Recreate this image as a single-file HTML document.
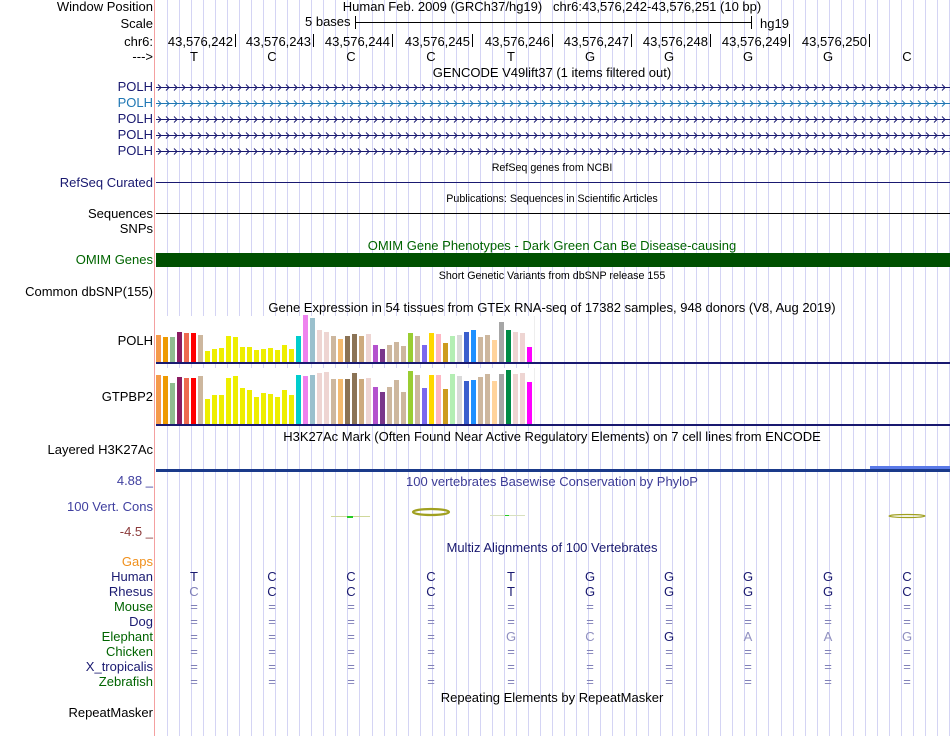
<!DOCTYPE html>
<html><head><meta charset="utf-8"><style>
body{margin:0;width:950px;height:736px;background:#fff;overflow:hidden;position:relative;font-family:"Liberation Sans",sans-serif;font-size:13px;color:#000}
.t{position:absolute;white-space:nowrap;line-height:14px}
.l{position:absolute;right:797px;text-align:right;white-space:nowrap;line-height:14px}
.c{position:absolute;white-space:nowrap;line-height:14px;transform:translateX(-50%)}
.s{font-size:10.7px}
.nv{color:#191970}
.gr{color:#006400}
</style></head><body>
<div id="grid"></div>
<div style="position:absolute;left:154px;top:0;width:1px;height:736px;background:#f4a0a0"></div>

<div class="l" style="top:0">Window Position</div>
<div class="c" style="left:552px;top:0">Human Feb. 2009 (GRCh37/hg19) &nbsp; chr6:43,576,242-43,576,251 (10 bp)</div>
<div class="l" style="top:17px">Scale</div>
<div class="t" style="left:305px;top:15px">5 bases</div>
<div style="position:absolute;left:355px;top:22px;width:396px;height:1px;background:#000"></div>
<div style="position:absolute;left:355px;top:16px;width:1px;height:13px;background:#000"></div>
<div style="position:absolute;left:751px;top:16px;width:1px;height:13px;background:#000"></div>
<div class="t" style="left:760px;top:17px">hg19</div>
<div class="l" style="top:35px">chr6:</div>
<div class="l" style="top:50px">---&gt;</div>
<div id="pos"></div>
<div class="c" style="left:552px;top:66px">GENCODE V49lift37 (1 items filtered out)</div>

<div class="l nv" style="top:80px">POLH</div>
<div class="l" style="top:96px;color:#1f77b4">POLH</div>
<div class="l nv" style="top:112px">POLH</div>
<div class="l nv" style="top:128px">POLH</div>
<div class="l nv" style="top:144px">POLH</div>
<svg style="position:absolute;left:156px;top:80px" width="794" height="80">
<defs><pattern id="ch" width="8" height="16" patternUnits="userSpaceOnUse"><path d="M2 4.5 L5 7.5 L2 10.5" stroke="#191970" fill="none" stroke-width="1"/></pattern>
<pattern id="ch2" width="8" height="16" patternUnits="userSpaceOnUse"><path d="M2 4.5 L5 7.5 L2 10.5" stroke="#1f77b4" fill="none" stroke-width="1"/></pattern></defs>
<rect x="0" y="7" width="794" height="1" fill="#191970"/><rect x="0" y="0" width="794" height="16" fill="url(#ch)"/>
<rect x="0" y="23" width="794" height="1" fill="#1f77b4"/><rect x="0" y="16" width="794" height="16" fill="url(#ch2)"/>
<rect x="0" y="39" width="794" height="1" fill="#191970"/><rect x="0" y="32" width="794" height="16" fill="url(#ch)"/>
<rect x="0" y="55" width="794" height="1" fill="#191970"/><rect x="0" y="48" width="794" height="16" fill="url(#ch)"/>
<rect x="0" y="71" width="794" height="1" fill="#191970"/><rect x="0" y="64" width="794" height="16" fill="url(#ch)"/>
</svg>

<div class="c s" style="left:552px;top:161px">RefSeq genes from NCBI</div>
<div class="l nv" style="top:176px">RefSeq Curated</div>
<div style="position:absolute;left:156px;top:182px;width:794px;height:1px;background:#191970"></div>
<div class="c s" style="left:552px;top:192px">Publications: Sequences in Scientific Articles</div>
<div class="l" style="top:207px">Sequences</div>
<div style="position:absolute;left:156px;top:213px;width:794px;height:1px;background:#000"></div>
<div class="l" style="top:222px">SNPs</div>
<div class="c gr" style="left:552px;top:239px">OMIM Gene Phenotypes - Dark Green Can Be Disease-causing</div>
<div class="l gr" style="top:253px">OMIM Genes</div>
<div style="position:absolute;left:156px;top:253px;width:794px;height:14px;background:#005000"></div>
<div class="c s" style="left:552px;top:269px">Short Genetic Variants from dbSNP release 155</div>
<div class="l" style="top:285px">Common dbSNP(155)</div>
<div class="c" style="left:552px;top:301px">Gene Expression in 54 tissues from GTEx RNA-seq of 17382 samples, 948 donors (V8, Aug 2019)</div>
<div style="position:absolute;left:156px;top:316px;width:378px;height:47px;background:#fff;border-right:1px solid #eee"></div>
<div style="position:absolute;left:156px;top:368px;width:378px;height:56px;background:#fff;border-right:1px solid #eee"></div>
<div class="l" style="top:334px">POLH</div>
<div class="l" style="top:390px">GTPBP2</div>
<div id="bars"></div>
<div style="position:absolute;left:156px;top:362px;width:794px;height:2px;background:#191970"></div>
<div style="position:absolute;left:156px;top:424px;width:794px;height:2px;background:#191970"></div>
<div class="c" style="left:552px;top:430px">H3K27Ac Mark (Often Found Near Active Regulatory Elements) on 7 cell lines from ENCODE</div>
<div class="l" style="top:443px">Layered H3K27Ac</div>
<div style="position:absolute;left:156px;top:469px;width:794px;height:3px;background:#1a3a8a"></div>
<div style="position:absolute;left:870px;top:466px;width:80px;height:3px;background:#5a7ae8"></div>

<div class="l" style="top:474px;color:#4040a0">4.88 _</div>
<div class="c" style="left:552px;top:475px;color:#3c3c96">100 vertebrates Basewise Conservation by PhyloP</div>
<div class="l" style="top:500px;color:#4040a0">100 Vert. Cons</div>
<div class="l" style="top:525px;color:#8b3a3a">-4.5 _</div>
<svg style="position:absolute;left:156px;top:500px" width="794" height="30">
<rect x="175" y="16" width="39" height="1" fill="#cfd89a"/><rect x="191" y="16" width="6" height="2" fill="#2c2"/>
<ellipse cx="275" cy="12" rx="18" ry="3" fill="none" stroke="#a0a020" stroke-width="2.2"/>
<rect x="334" y="15" width="35" height="1" fill="#d8e0c0"/><rect x="349" y="15" width="4" height="1" fill="#2c2"/>
<ellipse cx="751" cy="16" rx="18" ry="1.5" fill="none" stroke="#a0a020" stroke-width="1.2"/>
</svg>
<div class="c nv" style="left:552px;top:541px">Multiz Alignments of 100 Vertebrates</div>
<div class="l" style="top:555px;color:#f0901c">Gaps</div>
<div class="l nv" style="top:570px">Human</div>
<div class="l nv" style="top:585px">Rhesus</div>
<div class="l gr" style="top:600px">Mouse</div>
<div class="l nv" style="top:615px">Dog</div>
<div class="l gr" style="top:630px">Elephant</div>
<div class="l gr" style="top:645px">Chicken</div>
<div class="l nv" style="top:660px">X_tropicalis</div>
<div class="l gr" style="top:675px">Zebrafish</div>
<div id="aln"></div>
<div class="c" style="left:552px;top:691px">Repeating Elements by RepeatMasker</div>
<div class="l" style="top:706px">RepeatMasker</div>

<script>
var g='';for(var x=167;x<950;x+=12.03){g+='<div style="position:absolute;left:'+Math.round(x)+'px;top:0;width:1px;height:736px;background:#d4d4f4"></div>';}
document.getElementById('grid').innerHTML=g;
var cx=[194,272,351,431,511,590,669,748,828,907];
var nums=['242','243','244','245','246','247','248','249','250'];
var bases='TCCCTGGGGC';var p='';
for(var i=0;i<9;i++){p+='<div class="t" style="right:'+(950-cx[i]-39)+'px;top:35px">43,576,'+nums[i]+'</div><div style="position:absolute;left:'+(cx[i]+41)+'px;top:34px;width:1px;height:13px;background:#000"></div>';}
for(var i=0;i<10;i++){p+='<div class="c" style="left:'+cx[i]+'px;top:50px">'+bases[i]+'</div>';}
document.getElementById('pos').innerHTML=p;
var col=['#F59A4B','#EE9A00','#8FBC8F','#8B1C62','#EE6A50','#FF0000','#CDB79E','#EEEE00','#EEEE00','#EEEE00','#EEEE00','#EEEE00','#EEEE00','#EEEE00','#EEEE00','#EEEE00','#EEEE00','#EEEE00','#EEEE00','#EEEE00','#00CDCD','#EE82EE','#9AC0CD','#EED5D2','#EED5D2','#CDB79E','#F4BB70','#8B7355','#8B7355','#CDAA7D','#EED5D2','#B452CD','#7A378B','#CDB79E','#CDB79E','#CDB79E','#9ACD32','#CDB79E','#7B68EE','#FFD700','#FFB6C1','#CD9B1D','#B4EEB4','#D9D9D9','#3A5FCD','#1E90FF','#CDB79E','#CDB79E','#FFD39B','#A6A6A6','#008B45','#EED5D2','#EED5D2','#FF00FF'];
var a=[107,114,114,99,102,102,106,156,150,147,111,114,144,144,153,150,147,153,138,150,111,48,57,93,99,111,120,111,105,111,105,138,150,138,129,141,102,111,138,102,105,132,111,108,99,93,114,108,123,69,93,99,102,144];
var b=[222,225,246,228,231,231,225,294,282,282,231,225,261,267,288,276,279,288,267,282,222,225,222,216,213,234,234,234,216,234,231,258,273,258,237,273,210,222,261,222,222,264,219,225,240,237,228,219,240,219,207,219,216,243];
var h='';
for(var i=0;i<54;i++){var x=156+i*7;var ha=Math.round((188-a[i])/3),hb=Math.round((370-b[i])/3);
h+='<div style="position:absolute;left:'+x+'px;top:'+(362-ha)+'px;width:5px;height:'+ha+'px;background:'+col[i]+'"></div>';
h+='<div style="position:absolute;left:'+x+'px;top:'+(424-hb)+'px;width:5px;height:'+hb+'px;background:'+col[i]+'"></div>';}
document.getElementById('bars').innerHTML=h;
var s='';var dk='#191970',lt='#8080b8';
function cell(i,y,ch,c){s+='<div class="c" style="left:'+cx[i]+'px;top:'+y+'px;color:'+c+'">'+ch+'</div>';}
for(var i=0;i<10;i++){cell(i,570,bases[i],dk);cell(i,585,'CCCCTGGGGC'[i],i==0?lt:dk);}
var el='====GCGAAG';
for(var i=0;i<10;i++){for(var r=0;r<6;r++){var y=600+r*15;var ch='=';var c=lt;if(r==2){ch=el[i];c=(i==6)?dk:(i>=4?'#9090c0':lt);}cell(i,y,ch,c);}}
document.getElementById('aln').innerHTML=s;
</script>
</body></html>
